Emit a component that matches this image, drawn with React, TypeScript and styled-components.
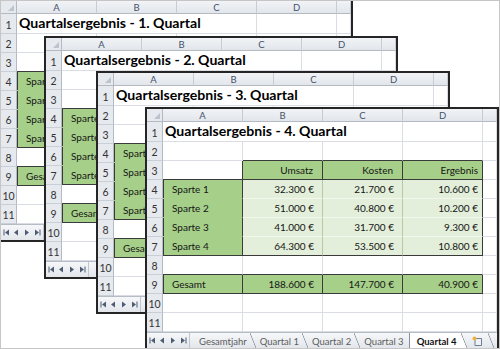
import React from "react"
import styled, { createGlobalStyle, css } from "styled-components"

const GRID = "#dadee4"
const DARK = "#3a3a3a"
const GREEN = "#a6cf8a"
const LIGHT = "#e3efda"
const FAINT = "#f1f7ed"
const INNER = "#b4c9a6"

const GlobalStyle = createGlobalStyle`
  html, body {
    margin: 0;
    padding: 0;
    background: #fff;
  }
  body {
    font-family: Lato, "Liberation Sans", sans-serif;
  }
`

const Canvas = styled.div`
  position: relative;
  width: 500px;
  height: 349px;
  box-sizing: border-box;
  border: 1px solid #c6c6c6;
  overflow: hidden;
  background: #fff;
`

const Window = styled.div<{ $x: number; $y: number }>`
  position: absolute;
  left: ${p => p.$x}px;
  top: ${p => p.$y}px;
  width: 354px;
  height: 243px;
  box-sizing: border-box;
  border: 2px solid #252525;
  background: #fff;
  display: flex;
  flex-direction: column;
  overflow: hidden;
`

const Grid = styled.div`
  flex: none;
  display: grid;
  grid-template-columns: 16px repeat(4, 80px) 1fr;
  grid-template-rows: 13px 20px repeat(10, 19px);
`

const Corner = styled.div`
  position: relative;
  box-sizing: border-box;
  background: #e6e9ed;
  border-right: 1px solid #b3bac4;
  border-bottom: 1px solid #b3bac4;
  &::after {
    content: "";
    position: absolute;
    right: 2px;
    bottom: 2px;
    border-style: solid;
    border-width: 0 0 6px 6px;
    border-color: transparent transparent #bcc3cc transparent;
  }
`

const ColHead = styled.div`
  box-sizing: border-box;
  display: flex;
  align-items: center;
  justify-content: center;
  background: linear-gradient(#f1f3f6, #e2e6eb);
  border-right: 1px solid #c7cdd5;
  border-bottom: 1px solid #b3bac4;
  font-size: 9.5px;
  color: #44536a;
`

const RowHead = styled.div`
  box-sizing: border-box;
  display: flex;
  align-items: center;
  justify-content: center;
  padding-top: 2px;
  background: #e6e9ee;
  border-right: 1px solid #b3bac4;
  border-bottom: 1px solid #c9cfd7;
  font-size: 10.5px;
  color: #333;
`

const Cell = styled.div<{
  $fill?: string
  $right: string
  $bottom: string
  $left?: boolean
  $align?: "left" | "right"
  $pad?: number
}>`
  box-sizing: border-box;
  display: flex;
  align-items: center;
  justify-content: ${p => (p.$align === "right" ? "flex-end" : "flex-start")};
  padding: ${p => (p.$align === "right" ? `0 ${p.$pad ?? 0}px 0 0` : `0 0 0 ${p.$pad ?? 0}px`)};
  background: ${p => p.$fill ?? "#fff"};
  border-right: 1px solid ${p => p.$right};
  border-bottom: 1px solid ${p => p.$bottom};
  box-shadow: ${p => (p.$left ? `inset 1px 0 0 ${DARK}` : "none")};
  font-size: 10px;
  color: #151515;
  white-space: nowrap;
`

const Title = styled.div`
  grid-column: span 3;
  box-sizing: border-box;
  display: flex;
  align-items: flex-end;
  padding: 0 0 2px 2px;
  border-right: 1px solid ${GRID};
  border-bottom: 1px solid ${GRID};
  font-size: 14.1px;
  font-weight: 700;
  color: #000;
  white-space: nowrap;
`

const TabBar = styled.div`
  flex: 1;
  min-height: 0;
  display: flex;
  align-items: stretch;
  background: linear-gradient(#f6f7f9, #e2e6eb);
  border-top: 1px solid #b5bcc6;
  font-size: 9.5px;
  color: #5c5c5c;
  overflow: hidden;
`

const Nav = styled.div`
  flex: none;
  width: 43px;
  display: flex;
  align-items: center;
  border-right: 1px solid #bfc6cf;
  box-sizing: border-box;
`

const Tab = styled.div<{ $active?: boolean; $first?: boolean }>`
  flex: none;
  display: flex;
  align-items: center;
  padding: 1px 3px 0 ${p => (p.$first ? 9 : 4)}px;
  ${p =>
    p.$active &&
    css`
      padding: 1px 4px 0 7px;
      background: #fff;
      font-weight: 700;
      color: #111;
    `}
`

const Slash = styled.span<{ $after?: boolean }>`
  flex: none;
  width: 6px;
  background: linear-gradient(
    to top right,
    ${p => (p.$after ? "#fff" : "transparent")} calc(50% - 0.7px),
    #87919e 50%,
    transparent calc(50% + 0.7px)
  );
`

const Edge = styled.span`
  flex: none;
  width: 1px;
  margin-left: 2px;
  background: #87919e;
`

const NewSheet = styled.div`
  flex: none;
  display: flex;
  align-items: center;
  padding: 0 5px 0 5px;
`

type Row = [string, string, string, string]

interface Quarter {
  n: number
  x: number
  y: number
  rows: Row[]
  total: [string, string, string]
}

const e = (v: string) => `${v}\u00a0€`

const quarters: Quarter[] = [
  {
    n: 1,
    x: -2,
    y: -2,
    rows: [
      ["Sparte 1", "28.400", "19.900", "8.500"],
      ["Sparte 2", "47.200", "38.100", "9.100"],
      ["Sparte 3", "36.800", "29.300", "7.500"],
      ["Sparte 4", "58.900", "49.600", "9.300"],
    ],
    total: ["171.300", "136.900", "34.400"],
  },
  {
    n: 2,
    x: 43,
    y: 35,
    rows: [
      ["Sparte 1", "30.100", "20.600", "9.500"],
      ["Sparte 2", "49.500", "39.700", "9.800"],
      ["Sparte 3", "38.200", "30.400", "7.800"],
      ["Sparte 4", "61.000", "51.200", "9.800"],
    ],
    total: ["178.800", "141.900", "36.900"],
  },
  {
    n: 3,
    x: 95,
    y: 70,
    rows: [
      ["Sparte 1", "31.500", "21.200", "10.300"],
      ["Sparte 2", "50.200", "40.100", "10.100"],
      ["Sparte 3", "39.900", "31.000", "8.900"],
      ["Sparte 4", "62.700", "52.400", "10.300"],
    ],
    total: ["184.300", "144.700", "39.600"],
  },
  {
    n: 4,
    x: 144,
    y: 106,
    rows: [
      ["Sparte 1", "32.300", "21.700", "10.600"],
      ["Sparte 2", "51.000", "40.800", "10.200"],
      ["Sparte 3", "41.000", "31.700", "9.300"],
      ["Sparte 4", "64.300", "53.500", "10.800"],
    ],
    total: ["188.600", "147.700", "40.900"],
  },
]

// look of a body cell: fill colour and the colours of its right / bottom line
function look(row: number, col: number) {
  const block = col <= 3
  let fill: string | undefined
  let right = GRID
  let bottom = GRID
  let left = false

  if (row === 3 && col >= 1 && col <= 3) fill = GREEN
  if (row >= 4 && row <= 7) fill = col === 0 ? GREEN : block ? LIGHT : undefined
  if (row === 9 && block) fill = GREEN

  if (row === 3 && block) right = DARK
  if (row >= 4 && row <= 7) {
    if (col === 0 || col === 3) right = DARK
    else if (col < 3) right = INNER
  }
  if (row === 9 && block) right = DARK

  if (row === 2 && col >= 1 && col <= 3) bottom = DARK
  if ((row === 3 || row === 7 || row === 8 || row === 9) && block) bottom = DARK
  if (row >= 4 && row <= 6 && block) bottom = col === 0 ? GREEN : FAINT

  if (col === 0 && ((row >= 4 && row <= 7) || row === 9)) left = true

  return { fill, right, bottom, left }
}

function content(q: Quarter, row: number, col: number): string {
  if (row === 3) return ["", "Umsatz", "Kosten", "Ergebnis", ""][col]
  if (row >= 4 && row <= 7 && col <= 3) {
    const v = q.rows[row - 4][col]
    return col === 0 ? v : e(v)
  }
  if (row === 9 && col <= 3) return col === 0 ? "Gesamt" : e(q.total[col - 1])
  return ""
}

function NavArrows() {
  const c = "#4d5c73"
  return (
    <svg width="42" height="15" viewBox="0 0 42 15">
      <rect x="2.5" y="4.5" width="1" height="6" fill={c} />
      <path d="M8 4.5 L4 7.5 L8 10.5 Z" fill={c} />
      <path d="M17 4.5 L13 7.5 L17 10.5 Z" fill={c} />
      <path d="M24 4.5 L28 7.5 L24 10.5 Z" fill={c} />
      <path d="M34 4.5 L38 7.5 L34 10.5 Z" fill={c} />
      <rect x="38.5" y="4.5" width="1" height="6" fill={c} />
    </svg>
  )
}

function SheetIcon() {
  return (
    <svg width="11" height="10" viewBox="0 0 11 10">
      <path d="M3 2.5 H9.5 V9.5 H3 Z" fill="#eef2f7" stroke="#6e7d93" strokeWidth="1" />
      <circle cx="2.5" cy="2.5" r="2" fill="#f3b13c" />
    </svg>
  )
}

const tabNames = ["Gesamtjahr", "Quartal 1", "Quartal 2", "Quartal 3", "Quartal 4"]

function Tabs() {
  return (
    <TabBar>
      <Nav>
        <NavArrows />
      </Nav>
      {tabNames.map((name, i) => {
        const active = i === tabNames.length - 1
        return (
          <React.Fragment key={name}>
            {active && <Edge />}
            <Tab $active={active} $first={i === 0}>
              {name}
            </Tab>
            {i < tabNames.length - 2 && <Slash />}
            {active && <Slash $after />}
          </React.Fragment>
        )
      })}
      <NewSheet>
        <SheetIcon />
      </NewSheet>
      <Slash />
    </TabBar>
  )
}

function Sheet({ q }: { q: Quarter }) {
  const cols = ["A", "B", "C", "D", ""]
  const rows = Array.from({ length: 11 }, (_, i) => i + 1)
  return (
    <Window $x={q.x} $y={q.y}>
      <Grid>
        <Corner />
        {cols.map((c, i) => (
          <ColHead key={i}>{c}</ColHead>
        ))}
        {rows.map(r => (
          <React.Fragment key={r}>
            <RowHead>{r}</RowHead>
            {r === 1 ? (
              <>
                <Title>Quartalsergebnis - {q.n}. Quartal</Title>
                <Cell $right={GRID} $bottom={GRID} />
                <Cell $right={GRID} $bottom={GRID} />
              </>
            ) : (
              cols.map((_, c) => {
                const l = look(r, c)
                const text = content(q, r, c)
                const isLabel = c === 0
                const pad = isLabel ? 9 : r === 3 ? (c === 3 ? 4 : 9) : c === 3 ? 4 : 8
                return (
                  <Cell
                    key={c}
                    $fill={l.fill}
                    $right={l.right}
                    $bottom={l.bottom}
                    $left={l.left}
                    $align={isLabel ? "left" : "right"}
                    $pad={pad}
                  >
                    {text}
                  </Cell>
                )
              })
            )}
          </React.Fragment>
        ))}
      </Grid>
      <Tabs />
    </Window>
  )
}

export default function App() {
  return (
    <>
      <GlobalStyle />
      <Canvas>
        {quarters.map(q => (
          <Sheet key={q.n} q={q} />
        ))}
      </Canvas>
    </>
  )
}
